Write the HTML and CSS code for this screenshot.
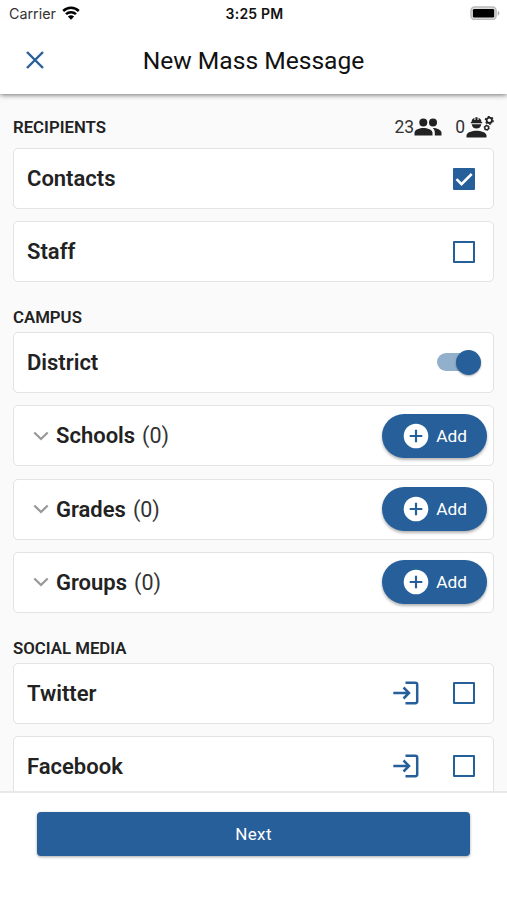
FILE: index.html
```html
<!DOCTYPE html>
<html lang="en">
<head>
<meta charset="utf-8">
<title>New Mass Message</title>
<link rel="stylesheet" href="styles.css">
</head>
<body>
<svg class="defs" width="0" height="0" aria-hidden="true">
  <symbol id="chevron" viewBox="0 0 16 10"><path d="M1.300 1.500 8 8l6.700-6.500" fill="none" stroke="#999" stroke-width="2.300"/></symbol>
  <symbol id="plus" viewBox="0 0 26 26"><circle cx="13" cy="13" r="12.300" fill="#fff"/><path d="M13 6.700v12.600M6.700 13h12.600" stroke="#265f99" stroke-width="2.200"/></symbol>
  <symbol id="login" viewBox="0 0 26 24"><path d="M12.500 1.800H22.300a1.900 1.900 0 0 1 1.900 1.900V20.300a1.900 1.900 0 0 1-1.900 1.900H12.500M.3 12H16M10.500 6.500 16 12l-5.500 5.500" fill="none" stroke="#265f99" stroke-width="2.500"/></symbol>
</svg>
<div class="screen">
  <header class="top">
    <div class="status">
      <div class="carrier">Carrier
        <svg class="wifi" viewBox="0 0 18 14"><path d="M1.200 5a11.200 11.200 0 0 1 15.600 0M4 8.200a7.200 7.200 0 0 1 10 0" fill="none" stroke="#000" stroke-width="2.500"/><path d="M9 13.800 5.900 10.600a4.500 4.500 0 0 1 6.200 0z"/></svg>
      </div>
      <div class="time">3:25 PM</div>
      <svg class="battery" viewBox="0 0 31 15"><rect x="1" y="1" width="26" height="13" rx="3.800" fill="#ddd" stroke="#bbb" stroke-width="1.600"/><rect x="3" y="3" width="22" height="9" rx="1.500"/><path d="M28.700 5c2.200.8 2.200 4.200 0 5z" fill="#aaa"/></svg>
    </div>
    <div class="titlebar">
      <svg class="close" viewBox="0 0 18 18"><path d="M1 1l16 16M17 1 1 17" stroke="#265f99" stroke-width="2.400"/></svg>
      <h1>New Mass Message</h1>
    </div>
  </header>
  <main>
    <section>
      <div class="heading"><h2>RECIPIENTS</h2>
        <div class="counts">
          <span>23</span><svg class="people" viewBox="0 0 28 18"><circle cx="9.300" cy="4.500" r="4"/><circle cx="19" cy="4.500" r="4"/><path d="M.5 17.500v-2.700c0-3.300 5.300-4.800 9-4.800s9 1.500 9 4.800v2.700zM18.800 10c3.800.1 8.700 1.700 8.700 4.800v2.700h-6.700v-2.700c0-2.100-.7-3.500-2-4.800z"/></svg>
          <span class="second">0</span><svg class="worker" viewBox="0 0 28 22"><path d="M.5 21.500v-2c0-3.300 5.800-4.800 10-4.800s10 1.500 10 4.800v2zM4.800 7.200V6h.8c0-2.100 1.200-3.700 2.800-4.300v2.200h1V1.300h2.200v2.600h1V1.700c1.600.6 2.800 2.200 2.800 4.300h.8v1.200zM5.700 8.300h9.600c-.3 2.600-2.200 4.300-4.800 4.300S6 10.900 5.700 8.300z"/><circle cx="23.300" cy="4.300" r="2.700" fill="none" stroke="#222" stroke-width="1.800"/><circle cx="23.300" cy="4.300" r="3.900" fill="none" stroke="#222" stroke-width="1.300" stroke-dasharray="2 2.080"/><circle cx="20.700" cy="11.700" r="1.900" fill="none" stroke="#222" stroke-width="1.400"/><circle cx="20.700" cy="11.700" r="2.700" fill="none" stroke="#222" stroke-width=".8" stroke-dasharray="1.400 1.430"/></svg>
        </div>
      </div>
      <div class="card"><b>Contacts</b><span class="check on"><svg viewBox="0 0 22 22"><path d="m3.500 11.200 5 5L18.700 6" fill="none" stroke="#fff" stroke-width="2.600"/></svg></span></div>
      <div class="card"><b>Staff</b><span class="check"></span></div>
    </section>
    <section>
      <div class="heading"><h2>CAMPUS</h2></div>
      <div class="card"><b>District</b><span class="switch"><i></i></span></div>
      <div class="card group"><svg class="chev"><use href="#chevron"/></svg><b>Schools</b><span class="num">(0)</span><button class="add"><svg><use href="#plus"/></svg>Add</button></div>
      <div class="card group"><svg class="chev"><use href="#chevron"/></svg><b>Grades</b><span class="num">(0)</span><button class="add"><svg><use href="#plus"/></svg>Add</button></div>
      <div class="card group"><svg class="chev"><use href="#chevron"/></svg><b>Groups</b><span class="num">(0)</span><button class="add"><svg><use href="#plus"/></svg>Add</button></div>
    </section>
    <section>
      <div class="heading"><h2>SOCIAL MEDIA</h2></div>
      <div class="card"><b>Twitter</b><svg class="login"><use href="#login"/></svg><span class="check"></span></div>
      <div class="card"><b>Facebook</b><svg class="login"><use href="#login"/></svg><span class="check"></span></div>
    </section>
  </main>
  <footer><button class="next">Next</button></footer>
</div>
</body>
</html>
```
FILE: styles.css
```css
* { box-sizing: border-box; }
body { margin: 0; font-family: Roboto, sans-serif; color: #222; }
svg { display: block; flex: none; }
button { border: 0; font-family: inherit; color: #fff; background: #265f99; }
.defs { display: none; }
.screen { height: 900px; display: flex; flex-direction: column; overflow: hidden; background: #fafafa; }
.top { position: relative; height: 94px; flex: none; background: #fff; box-shadow: 0 1px 5px rgba(0,0,0,.55); }
.status { height: 27px; padding: 0 7px 0 9px; display: grid; grid-template-columns: 1fr auto 1fr; align-items: center; font-family: Inter, sans-serif; font-size: 14px; color: #111; }
.carrier { display: flex; align-items: center; gap: 6px; font-size: 14.300px; color: #333; }
.wifi { width: 18px; height: 14px; margin-top: -2px; }
.time { font-weight: 600; letter-spacing: .2px; }
.battery { width: 30px; height: 14.500px; justify-self: end; margin-top: -1px; }
.titlebar { height: 67px; display: grid; grid-template-columns: 27px 1fr 27px; align-items: center; }
.close { width: 18px; height: 18px; margin-left: 26px; margin-top: -2px; }
h1 { margin: 0; text-align: center; font-size: 24.600px; font-weight: 400; letter-spacing: 0; color: #111; }
main { flex: 1; min-height: 0; overflow: hidden; padding: 20px 13px 0; }
.heading { height: 34px; display: flex; justify-content: space-between; padding-top: 3px; }
section + section .heading { height: 37.400px; padding-top: 12.400px; }
h2 { margin: 0; font-size: 16.800px; line-height: 20px; font-weight: 600; }
.counts { display: flex; height: 20px; align-items: center; font-size: 17.500px; color: #333; }
.counts svg { fill: #222; }
.people { width: 28px; height: 18px; }
.worker { width: 28px; height: 22px; margin-left: 1px; }
.second { margin-left: 13px; }
.card { height: 61px; margin-bottom: 12.300px; padding: 0 18px 0 13px; display: flex; align-items: center; border: 1px solid #e3e3e3; border-radius: 5px; background: #fff; }
b { margin-right: auto; font-size: 22px; font-weight: 600; }
.check { width: 22px; height: 22px; border: 2px solid #265f99; border-radius: 1px; }
.on { border: 0; background: #265f99; }
.switch { width: 44px; height: 26px; margin-right: -6px; display: flex; align-items: center; }
.switch::before { content: ""; width: 36px; height: 18px; border-radius: 9px; background: #92afcc; }
.switch i { width: 25px; height: 25px; flex: none; margin-left: -17px; border-radius: 50%; background: #265f99; box-shadow: 0 1px 2px rgba(0,0,0,.35); }
.group { padding: 0 6px 0 19px; }
.chev { width: 16px; height: 10px; margin-right: 7px; }
.group b { margin-right: 7px; }
.num { font-size: 21.500px; color: #333; }
.add { width: 105px; height: 44px; margin-left: auto; padding: 0 20px 0 21px; display: flex; align-items: center; justify-content: space-between; border-radius: 22px; font-size: 17.300px; box-shadow: 0 2px 3px rgba(0,0,0,.3); }
.add svg { width: 26px; height: 26px; }
.login { width: 26px; height: 24px; margin-right: 34px; }
footer { height: 109px; flex: none; padding: 19px 37px 0; border-top: 2px solid #e8e8e8; background: #fff; }
.next { display: block; width: 100%; height: 44px; border-radius: 4px; font-size: 17px; letter-spacing: .4px; box-shadow: 0 1px 3px rgba(0,0,0,.35); }
```
